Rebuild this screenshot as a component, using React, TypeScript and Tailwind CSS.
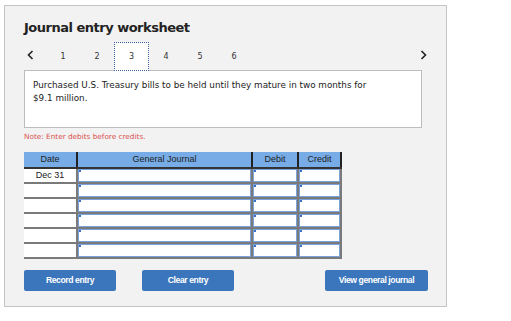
import React from "react";

const rows = ["Dec 31", "", "", "", "", ""];

function InputCell({ w }: { w: string }) {
  return (
    <div className={`${w} h-full border-l-2 border-[#7a7a7a] flex`}>
      <div className="relative flex-1 h-full border border-[#7aa3dc] bg-white">
        <div className="absolute left-0 top-0 w-[2px] h-[2px] bg-[#3a6fc4]" />
      </div>
    </div>
  );
}

export default function App() {
  return (
    <div className="w-[511px] h-[321px] bg-white relative" style={{ fontFamily: '"DejaVu Sans", Verdana, sans-serif' }}>
      <div className="absolute left-[4px] top-[5px] w-[443px] h-[302px] border border-[#c4c4c4] bg-[#f2f2f2]">
        <div className="pl-[19px] pt-[14px] flex flex-col">
          <div className="text-[13px] font-bold text-[#222] leading-[16px] tracking-[-0.5px]">Journal entry worksheet</div>
          {/* tabs */}
          <div className="relative h-[29px] mt-[6px] flex items-center">
            <svg className="absolute left-[3px] top-[8px]" width="7" height="10" viewBox="0 0 7 10">
              <polyline points="5.5,1 1.5,5 5.5,9" fill="none" stroke="#222" strokeWidth="1.6" />
            </svg>
            <div className="ml-[22px] flex h-full">
              {[1, 2, 3, 4, 5, 6].map((n) => (
                <div
                  key={n}
                  className={`w-[34px] h-full flex items-center justify-center text-[8px] text-[#333] ${n === 3 ? "border border-dotted border-[#3a5f9a] bg-white relative z-10 w-[35px]" : ""}`}
                >
                  {n}
                </div>
              ))}
            </div>
            <svg className="absolute left-[396px] top-[8px]" width="7" height="10" viewBox="0 0 7 10">
              <polyline points="1.5,1 5.5,5 1.5,9" fill="none" stroke="#222" strokeWidth="1.6" />
            </svg>
          </div>
          {/* text box */}
          <div className="w-[398px] h-[58px] -mt-[1px] border border-[#bdbdbd] bg-white px-[8px] pt-[8px] text-[8.8px] leading-[13px] text-[#222]">
            Purchased U.S. Treasury bills to be held until they mature in two months for
            <br />$9.1 million.
          </div>
          <div className="mt-[4px] text-[7.3px] text-[#d9534f] leading-[10px]">Note: Enter debits before credits.</div>
          {/* table */}
          <div className="mt-[10px] w-[318px] flex flex-col" style={{ fontFamily: '"Liberation Sans", Arial, sans-serif' }}>
            <div className="flex h-[17px] bg-[#78ace6] border-b-2 border-[#333] text-[9px] text-[#222]">
              <div className="w-[52px] flex items-center justify-center">Date</div>
              <div className="w-[175px] border-l-2 border-[#222] flex items-center justify-center">General Journal</div>
              <div className="w-[46px] border-l-2 border-[#222] flex items-center justify-center">Debit</div>
              <div className="w-[45px] border-l-2 border-r-2 border-[#222] flex items-center justify-center">Credit</div>
            </div>
            {rows.map((d, i) => (
              <div key={i} className="flex h-[15px] border-b-2 border-[#7a7a7a] border-r-2">
                <div className="w-[52px] h-full bg-white flex items-center justify-center text-[9px] text-[#222]">{d}</div>
                <InputCell w="w-[175px]" />
                <InputCell w="w-[46px]" />
                <InputCell w="w-[43px]" />
              </div>
            ))}
          </div>
          {/* buttons */}
          <div className="mt-[11px] flex h-[21px] text-[8.6px] font-bold text-white tracking-[-0.4px]" style={{ fontFamily: '"Liberation Sans", Arial, sans-serif' }}>
            <div className="w-[92px] bg-[#3b76bd] rounded-[2px] flex items-center justify-center">Record entry</div>
            <div className="ml-[26px] w-[92px] bg-[#3b76bd] rounded-[2px] flex items-center justify-center">Clear entry</div>
            <div className="ml-[91px] w-[103px] bg-[#3b76bd] rounded-[2px] flex items-center justify-center">View general journal</div>
          </div>
        </div>
      </div>
    </div>
  );
}
